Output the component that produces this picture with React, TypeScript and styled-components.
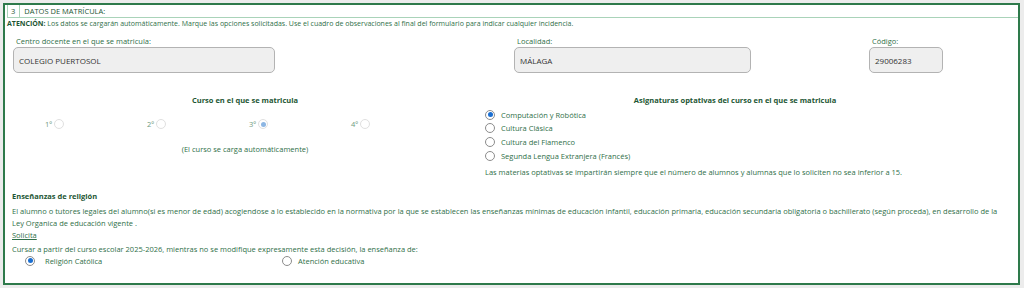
import React from "react";
import styled, { createGlobalStyle, css } from "styled-components";

const Global = createGlobalStyle`
  html, body { margin: 0; padding: 0; background: #ececec; }
  body { font-family: "Open Sans", "Noto Sans", sans-serif; }
  * { box-sizing: border-box; }
`;

const TEXT = "#2f6f49";
const DARK = "#1d5634";

const Panel = styled.section`
  margin: 3px 4px 0 3px;
  height: 282px;
  border: 2px solid #2e7a4b;
  background: #fff;
  display: flex;
  flex-direction: column;
  color: ${TEXT};
`;

const Header = styled.div`
  display: flex;
  align-items: stretch;
  height: 13px;
  margin: 0 0 0 2px;
  border-left: 1px solid #a9d3b9;
  border-bottom: 1px solid #a9d3b9;
  font-size: 7.5px;
  line-height: 12px;
  color: ${DARK};
`;

const Num = styled.span`
  padding: 0 4px 0 3px;
  border-right: 1px solid #a9d3b9;
`;

const Title = styled.span`
  padding-left: 4px;
  text-transform: uppercase;
`;

const Notice = styled.div`
  font-size: 7px;
  line-height: 12px;
  padding-left: 2px;
  b { color: ${DARK}; font-weight: 700; }
`;

const FieldGrid = styled.div`
  display: grid;
  grid-template-columns: 501px 355px 74px;
  padding-left: 8px;
  margin-top: 6px;
`;

const Field = styled.div`
  display: flex;
  flex-direction: column;
`;

const Label = styled.label`
  font-size: 7.5px;
  line-height: 11px;
  padding-left: 3px;
`;

const Input = styled.div<{ $w: number }>`
  width: ${(p) => p.$w}px;
  height: 26px;
  border: 1px solid #b3b3b3;
  border-radius: 5px;
  background: #efefef;
  display: flex;
  align-items: center;
  padding-left: 5px;
  font-size: 8px;
  color: #333;
`;

const Split = styled.div`
  display: grid;
  grid-template-columns: 480px 500px;
  margin-top: 21px;
`;

const Col = styled.div`
  display: flex;
  flex-direction: column;
`;

const SubTitle = styled.div`
  font-size: 7.5px;
  line-height: 12px;
  font-weight: 700;
  color: ${DARK};
  text-align: center;
`;

const CourseRow = styled.div`
  display: grid;
  grid-template-columns: repeat(4, 102px);
  padding-left: 40px;
  margin-top: 12px;
  height: 12px;
`;

const Course = styled.label`
  display: flex;
  align-items: center;
  gap: 2px;
  font-size: 7.5px;
  line-height: 12px;
  color: #6f9a80;
`;

const CenterNote = styled.div`
  text-align: center;
  font-size: 7.5px;
  line-height: 12px;
  margin-top: 13px;
`;

const Options = styled.div`
  display: flex;
  flex-direction: column;
  margin-top: 2px;
`;

const Option = styled.label`
  display: flex;
  align-items: center;
  gap: 6px;
  height: 13.67px;
  font-size: 7.5px;
`;

const Radio = styled.span<{ $on?: boolean; $faint?: boolean }>`
  width: 10px;
  height: 10px;
  border-radius: 50%;
  flex: none;
  background: #fff;
  border: 1px solid ${(p) => (p.$faint ? "#e0e0e0" : "#8c8c8c")};
  display: flex;
  align-items: center;
  justify-content: center;
  ${(p) =>
    p.$on &&
    css`
      &::after {
        content: "";
        width: 5px;
        height: 5px;
        border-radius: 50%;
        background: ${p.$faint ? "#8db6e3" : "#1b6fd1"};
      }
    `}
`;

const SmallNote = styled.div`
  font-size: 7.5px;
  line-height: 12px;
  margin-top: 3px;
`;

const Religion = styled.div`
  padding: 0 8px 0 7px;
  margin-top: 12px;
  font-size: 7.5px;
  line-height: 12px;
`;

const RelTitle = styled.div`
  font-weight: 700;
  color: ${DARK};
  margin-bottom: 3px;
`;

const Para = styled.p`
  margin: 0;
`;

const Solicita = styled.div`
  text-decoration: underline;
  margin-bottom: 2px;
`;

const RelRow = styled.div`
  display: grid;
  grid-template-columns: 257px auto;
  margin-left: 13px;
`;

const RelOption = styled.label<{ $gap: number }>`
  display: flex;
  align-items: center;
  gap: ${(p) => p.$gap}px;
  height: 12px;
`;

const courses = [
  { n: "1º", on: false },
  { n: "2º", on: false },
  { n: "3º", on: true },
  { n: "4º", on: false },
];

const optativas = [
  { t: "Computación y Robótica", on: true },
  { t: "Cultura Clásica", on: false },
  { t: "Cultura del Flamenco", on: false },
  { t: "Segunda Lengua Extranjera (Francés)", on: false },
];

export default function App() {
  return (
    <>
      <Global />
      <Panel>
        <Header>
          <Num>3</Num>
          <Title>Datos de matrícula:</Title>
        </Header>
        <Notice>
          <b>ATENCIÓN:</b> Los datos se cargarán automáticamente. Marque las opciones solicitadas. Use el cuadro de
          observaciones al final del formulario para indicar cualquier incidencia.
        </Notice>
        <FieldGrid>
          <Field>
            <Label>Centro docente en el que se matricula:</Label>
            <Input $w={262}>COLEGIO PUERTOSOL</Input>
          </Field>
          <Field>
            <Label>Localidad:</Label>
            <Input $w={237}>MÁLAGA</Input>
          </Field>
          <Field>
            <Label>Código:</Label>
            <Input $w={74}>29006283</Input>
          </Field>
        </FieldGrid>
        <Split>
          <Col>
            <SubTitle>Curso en el que se matricula</SubTitle>
            <CourseRow>
              {courses.map((c) => (
                <Course key={c.n}>
                  {c.n}
                  <Radio $faint $on={c.on} />
                </Course>
              ))}
            </CourseRow>
            <CenterNote>(El curso se carga automáticamente)</CenterNote>
          </Col>
          <Col>
            <SubTitle>Asignaturas optativas del curso en el que se matricula</SubTitle>
            <Options>
              {optativas.map((o) => (
                <Option key={o.t}>
                  <Radio $on={o.on} />
                  {o.t}
                </Option>
              ))}
            </Options>
            <SmallNote>
              Las materias optativas se impartirán siempre que el número de alumnos y alumnas que lo soliciten no sea
              inferior a 15.
            </SmallNote>
          </Col>
        </Split>
        <Religion>
          <RelTitle>Enseñanzas de religión</RelTitle>
          <Para>
            El alumno o tutores legales del alumno(si es menor de edad) acogiendose a lo establecido en la normativa por
            la que se establecen las enseñanzas mínimas de educación infantil, educación primaria, educación secundaria
            obligatoria o bachillerato (según proceda), en desarrollo de la Ley Organica de educación vigente .
          </Para>
          <Solicita>Solicita</Solicita>
          <div>
            Cursar a partir del curso escolar 2025-2026, mientras no se modifique expresamente esta decisión, la
            enseñanza de:
          </div>
          <RelRow>
            <RelOption $gap={10}>
              <Radio $on />
              Religión Católica
            </RelOption>
            <RelOption $gap={6}>
              <Radio />
              Atención educativa
            </RelOption>
          </RelRow>
        </Religion>
      </Panel>
    </>
  );
}
